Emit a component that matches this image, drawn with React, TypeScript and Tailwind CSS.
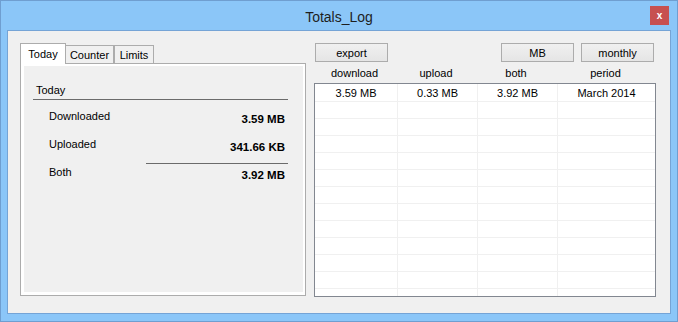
import React from "react";

const COLS = ["w-[83px] border-r", "w-[80px] border-r", "w-[80px] border-r", "flex-1"];

const rows = [
  { download: "3.59 MB", upload: "0.33 MB", both: "3.92 MB", period: "March 2014" },
  ...Array.from({ length: 12 }, () => ({ download: "", upload: "", both: "", period: "" })),
];

function WinButton({ label, className = "" }: { label: string; className?: string }) {
  return (
    <button
      className={`h-[19px] w-[73px] border border-[#acacac] bg-gradient-to-b from-[#f0f0f0] to-[#e5e5e5] text-[11px] leading-[14px] text-black ${className}`}
    >
      {label}
    </button>
  );
}

function StatRow({
  label,
  value,
  height,
  labelTop,
  valueTop,
}: {
  label: string;
  value: string;
  height: string;
  labelTop: string;
  valueTop: string;
}) {
  return (
    <div className={`flex items-start justify-between ${height}`}>
      <span className={`pl-[16px] text-[11px] leading-[14px] text-black ${labelTop}`}>{label}</span>
      <span className={`pr-[3px] text-[11.5px] font-bold leading-[14px] text-black ${valueTop}`}>{value}</span>
    </div>
  );
}

export default function App() {
  return (
    <div className="relative flex h-[322px] w-[678px] flex-col border border-[#6f9ed0] bg-[#8bc6f8] font-['Liberation_Sans',Arial,sans-serif]">
      <div className="flex h-[29px] items-center justify-center pt-[2px] text-[14px] leading-[16px] text-[#1e1e1e]">
        Totals_Log
      </div>
      <div className="absolute left-[649px] top-[5px] flex h-[19px] w-[19px] items-center justify-center bg-[#c75050] text-[10px] font-bold leading-none text-white">
        x
      </div>

      <div className="mx-[6px] flex h-[284px] border border-[#75a4d6] bg-[#f0f0f0] pl-[12px] pt-[12px]">
        {/* tab control */}
        <div className="flex w-[286px] flex-col">
          <div className="flex h-[20px] items-end text-[11px] leading-[14px] text-black">
            <div className="relative z-10 -mb-px flex h-[21px] w-[46px] items-center justify-center border border-b-0 border-[#acacac] bg-white">
              Today
            </div>
            <div className="flex h-[18px] w-[48px] items-center justify-center border border-b-0 border-l-0 border-[#acacac] bg-[#f0f0f0]">
              Counter
            </div>
            <div className="flex h-[18px] w-[40px] items-center justify-center border border-b-0 border-[#acacac] bg-[#f0f0f0]">
              Limits
            </div>
          </div>
          <div className="flex h-[233px] flex-col border border-[#acacac] bg-white pb-[3px] pl-[3px] pr-[2px] pt-[2px]">
            <div className="flex-1 bg-[#f0f0f0]">
              <div className="ml-[9px] w-[255px] pt-[17px]">
                <div className="h-[16px] pl-[3px] text-[11px] leading-[14px] text-black">Today</div>
                <div className="h-px bg-[#6b6b6b]" />
                <StatRow label="Downloaded" value="3.59 MB" height="h-[28px]" labelTop="pt-[9px]" valueTop="pt-[12px]" />
                <StatRow label="Uploaded" value="341.66 KB" height="h-[35px]" labelTop="pt-[9px]" valueTop="pt-[12px]" />
                <div className="ml-[113px] h-px bg-[#6b6b6b]" />
                <StatRow label="Both" value="3.92 MB" height="h-[28px]" labelTop="pt-[1px]" valueTop="pt-[4px]" />
              </div>
            </div>
          </div>
        </div>

        {/* log table */}
        <div className="ml-[8px] flex w-[342px] flex-col">
          <div className="flex h-[19px]">
            <WinButton label="export" className="ml-px" />
            <WinButton label="MB" className="ml-auto" />
            <WinButton label="monthly" className="ml-[7px] mr-[2px]" />
          </div>
          <div className="mt-[4px] flex h-[14px] -translate-x-[1px] text-[11px] leading-[14px] text-black">
            {["download", "upload", "both", "period"].map((h, i) => (
              <div key={h} className={`${COLS[i].replace(" border-r", "")} text-center`}>
                {h}
              </div>
            ))}
          </div>
          <div className="mt-[3px] h-[214px] overflow-hidden border border-[#828790] bg-white">
            {rows.map((r, ri) => (
              <div
                key={ri}
                className={`flex border-b border-[#f0f0f0] text-[11px] leading-[14px] text-black ${
                  ri === 0 ? "h-[18px]" : "h-[17px]"
                }`}
              >
                {[r.download, r.upload, r.both, r.period].map((v, ci) => (
                  <div
                    key={ci}
                    className={`${COLS[ci]} flex items-center justify-center border-[#f0f0f0]`}
                  >
                    {v}
                  </div>
                ))}
              </div>
            ))}
          </div>
        </div>
      </div>
    </div>
  );
}
